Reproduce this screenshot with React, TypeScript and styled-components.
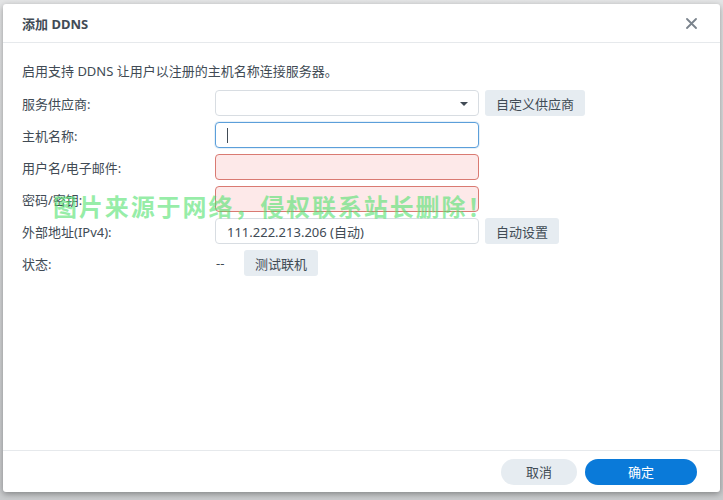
import React from 'react'
import styled, { createGlobalStyle } from 'styled-components'

const GlobalStyle = createGlobalStyle`
  html, body {
    margin: 0;
    padding: 0;
    background: #cfd1d3;
  }
  body {
    font-family: "Noto Sans", "Noto Sans CJK SC", sans-serif;
    color: #414b55;
  }
`

const Screen = styled.div`
  width: 723px;
  height: 500px;
  box-sizing: border-box;
  padding: 4px 3px 8px 3px;
  background: linear-gradient(#e4e5e6, #c9cbcd);
`

const Dialog = styled.div`
  position: relative;
  height: 100%;
  display: flex;
  flex-direction: column;
  background: #fff;
  border-radius: 3px;
  box-shadow: 0 2px 6px rgba(0, 0, 0, 0.35);
  overflow: hidden;
`

const Header = styled.header`
  height: 38px;
  flex: none;
  display: flex;
  align-items: center;
  justify-content: space-between;
  padding: 0 19px;
  border-bottom: 1px solid #e6e9ec;
`

const Title = styled.h1`
  margin: 0;
  font-size: 13px;
  font-weight: 700;
  color: #414b55;
`

const Close = styled.button`
  border: 0;
  background: none;
  padding: 0;
  width: 16px;
  height: 16px;
  display: flex;
  align-items: center;
  justify-content: center;
  cursor: pointer;
  margin-right: 2px;
`

const Body = styled.div`
  flex: 1;
  padding: 18px 19px 0 19px;
`

const Intro = styled.p`
  margin: 0 0 9px 0;
  font-size: 13px;
  line-height: 20px;
`

const Form = styled.div`
  display: grid;
  grid-template-columns: 193px auto;
  row-gap: 6px;
`

const Label = styled.div`
  font-size: 13px;
  height: 26px;
  display: flex;
  align-items: center;
`

const Field = styled.div`
  display: flex;
  align-items: center;
  gap: 6px;
`

const Input = styled.div<{ $state?: 'focus' | 'error' }>`
  position: relative;
  width: 264px;
  height: 26px;
  box-sizing: border-box;
  border-radius: 4px;
  border: 1px solid
    ${p => (p.$state === 'focus' ? '#5c9fda' : p.$state === 'error' ? '#d97a72' : '#d8dde2')};
  background: ${p => (p.$state === 'error' ? '#fde9e9' : '#fff')};
  box-shadow: ${p => (p.$state === 'focus' ? '0 0 0 1px rgba(92,159,218,0.15)' : 'none')};
  display: flex;
  align-items: center;
  padding: 0 11px;
  font-size: 13px;
  color: #414b55;
`

const Caret = styled.span`
  width: 1px;
  height: 15px;
  background: #414b55;
`

const DropArrow = styled.span`
  position: absolute;
  right: 10px;
  top: 11px;
  width: 0;
  height: 0;
  border-left: 4px solid transparent;
  border-right: 4px solid transparent;
  border-top: 4px solid #414b55;
`

const Button = styled.button<{ $primary?: boolean; $pill?: boolean }>`
  height: 26px;
  border: 0;
  border-radius: ${p => (p.$pill ? '13px' : '3px')};
  padding: 0 11px;
  font-family: inherit;
  font-size: 13px;
  background: ${p => (p.$primary ? '#0a7ad9' : '#e6ecf1')};
  color: ${p => (p.$primary ? '#fff' : '#414b55')};
  cursor: pointer;
`

const Dash = styled.span`
  font-size: 13px;
  width: 22px;
  padding-left: 1px;
`

const Footer = styled.footer`
  height: 42px;
  flex: none;
  border-top: 1px solid #e6e9ec;
  display: flex;
  align-items: center;
  justify-content: flex-end;
  gap: 8px;
  padding: 0 23px 0 0;
  box-sizing: border-box;
`

const Watermark = styled.div`
  position: absolute;
  left: 50px;
  top: 184px;
  font-family: "Noto Sans CJK SC", sans-serif;
  font-size: 24px;
  font-weight: 700;
  letter-spacing: 1.9px;
  color: rgba(80, 225, 110, 0.6);
  pointer-events: none;
  white-space: nowrap;
`

export default function App() {
  return (
    <>
      <GlobalStyle />
      <Screen>
        <Dialog>
          <Header>
            <Title>添加 DDNS</Title>
            <Close aria-label="关闭">
              <svg width="11" height="11" viewBox="0 0 11 11">
                <path d="M1 1L10 10M10 1L1 10" stroke="#7a838c" strokeWidth="1.8" strokeLinecap="round" />
              </svg>
            </Close>
          </Header>
          <Body>
            <Intro>启用支持 DDNS 让用户以注册的主机名称连接服务器。</Intro>
            <Form>
              <Label>服务供应商:</Label>
              <Field>
                <Input>
                  <DropArrow />
                </Input>
                <Button>自定义供应商</Button>
              </Field>
              <Label>主机名称:</Label>
              <Field>
                <Input $state="focus">
                  <Caret />
                </Input>
              </Field>
              <Label>用户名/电子邮件:</Label>
              <Field>
                <Input $state="error" />
              </Field>
              <Label>密码/密钥:</Label>
              <Field>
                <Input $state="error" />
              </Field>
              <Label>外部地址(IPv4):</Label>
              <Field>
                <Input>111.222.213.206 (自动)</Input>
                <Button>自动设置</Button>
              </Field>
              <Label>状态:</Label>
              <Field>
                <Dash>--</Dash>
                <Button>测试联机</Button>
              </Field>
            </Form>
          </Body>
          <Footer>
            <Button $pill style={{ width: 76 }}>取消</Button>
            <Button $pill $primary style={{ width: 112 }}>确定</Button>
          </Footer>
          <Watermark>图片来源于网络，侵权联系站长删除！</Watermark>
        </Dialog>
      </Screen>
    </>
  )
}
